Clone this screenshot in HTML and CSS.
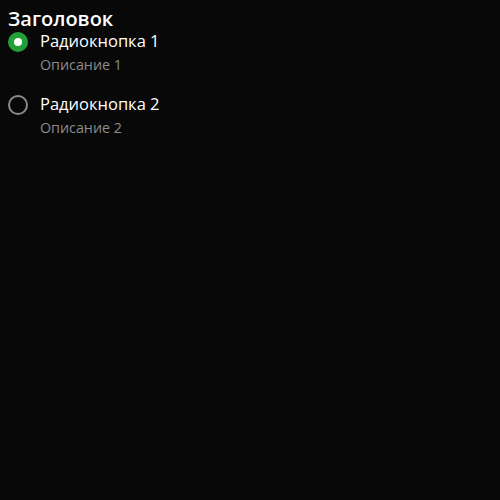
FILE: index.html
```html
<!DOCTYPE html>
<html>
<head>
<meta charset="utf-8">
<link rel="stylesheet" href="styles.css">
</head>
<body>
<div class="group">
  <div class="title">Заголовок</div>
  <div class="list">
    <label class="item">
      <span class="radio checked"><span class="dot"></span></span>
      <span class="text">
        <span class="label">Радиокнопка 1</span>
        <span class="desc">Описание 1</span>
      </span>
    </label>
    <label class="item">
      <span class="radio"></span>
      <span class="text">
        <span class="label">Радиокнопка 2</span>
        <span class="desc">Описание 2</span>
      </span>
    </label>
  </div>
</div>
</body>
</html>
```
FILE: styles.css
```css
html, body {
  margin: 0;
  background: #080808;
  height: 100%;
}
body {
  font-family: "Open Sans", sans-serif;
  color: #ffffff;
}
.group {
  padding: 7px 8px;
  display: flex;
  flex-direction: column;
}
.title {
  font-size: 20px;
  font-weight: 600;
  line-height: 23px;
}
.list {
  display: flex;
  flex-direction: column;
  gap: 17px;
}
.item {
  display: flex;
  gap: 12px;
  align-items: flex-start;
}
.radio {
  box-sizing: border-box;
  width: 20px;
  height: 20px;
  border-radius: 50%;
  border: 2px solid #8a8a8a;
  display: flex;
  align-items: center;
  justify-content: center;
  margin-top: 2px;
  flex: none;
}
.radio.checked {
  border: none;
  background: #21a038;
}
.dot {
  width: 8px;
  height: 8px;
  border-radius: 50%;
  background: #fff;
}
.text {
  display: flex;
  flex-direction: column;
}
.label {
  font-size: 16.5px;
  line-height: 22px;
}
.desc {
  margin-top: 2px;
  font-size: 14.3px;
  line-height: 22px;
  color: #8c8c8c;
}
```
